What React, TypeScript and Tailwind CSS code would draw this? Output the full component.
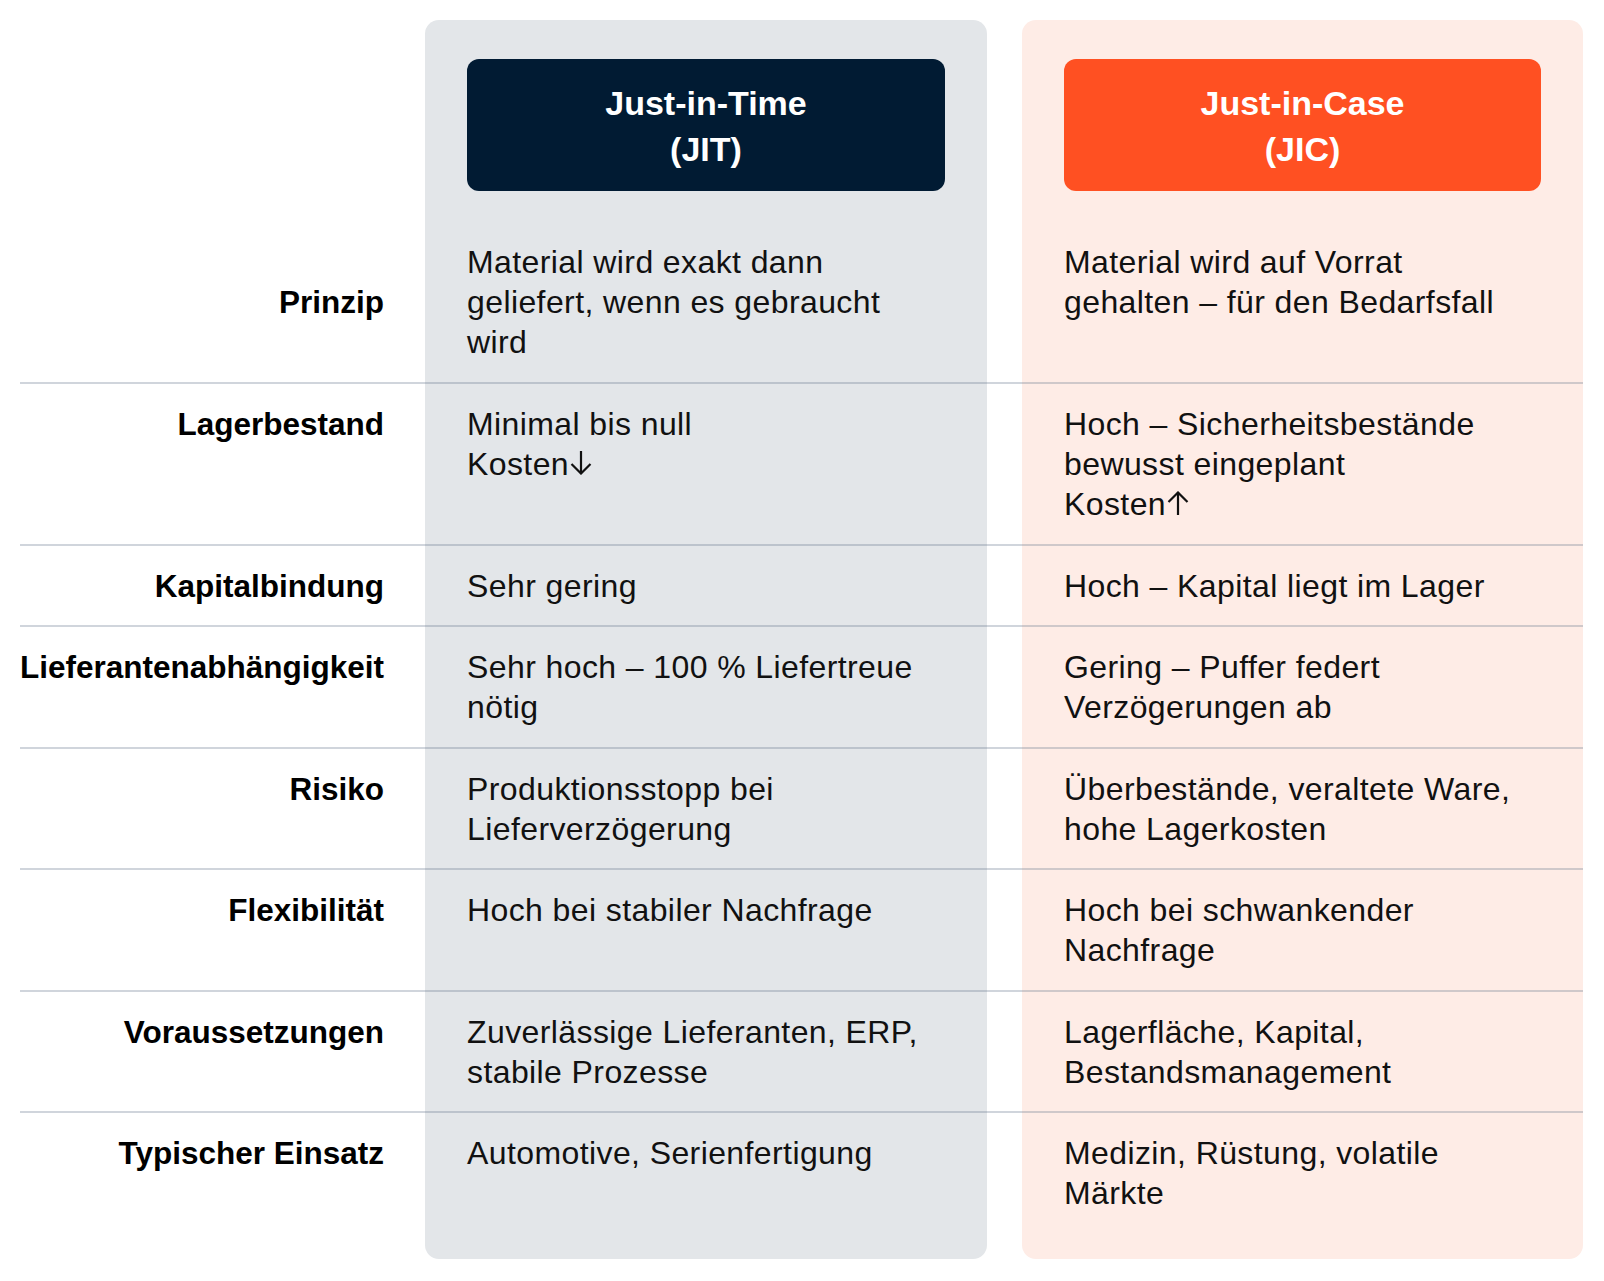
import React from "react";

type RowData = { label: string; jit: string[]; jic: string[] };

const rows: RowData[] = [
  {
    label: "Prinzip",
    jit: ["Material wird exakt dann", "geliefert, wenn es gebraucht", "wird"],
    jic: ["Material wird auf Vorrat", "gehalten – für den Bedarfsfall"],
  },
  {
    label: "Lagerbestand",
    jit: ["Minimal bis null", "Kosten↓"],
    jic: ["Hoch – Sicherheitsbestände", "bewusst eingeplant", "Kosten↑"],
  },
  {
    label: "Kapitalbindung",
    jit: ["Sehr gering"],
    jic: ["Hoch – Kapital liegt im Lager"],
  },
  {
    label: "Lieferantenabhängigkeit",
    jit: ["Sehr hoch – 100 % Liefertreue", "nötig"],
    jic: ["Gering – Puffer federt", "Verzögerungen ab"],
  },
  {
    label: "Risiko",
    jit: ["Produktionsstopp bei", "Lieferverzögerung"],
    jic: ["Überbestände, veraltete Ware,", "hohe Lagerkosten"],
  },
  {
    label: "Flexibilität",
    jit: ["Hoch bei stabiler Nachfrage"],
    jic: ["Hoch bei schwankender", "Nachfrage"],
  },
  {
    label: "Voraussetzungen",
    jit: ["Zuverlässige Lieferanten, ERP,", "stabile Prozesse"],
    jic: ["Lagerfläche, Kapital,", "Bestandsmanagement"],
  },
  {
    label: "Typischer Einsatz",
    jit: ["Automotive, Serienfertigung"],
    jic: ["Medizin, Rüstung, volatile", "Märkte"],
  },
];

function Arrow({ up }: { up: boolean }) {
  return (
    <svg
      width="22"
      height="24"
      viewBox="0 0 22 24"
      className="inline-block align-baseline ml-[1px]"
      fill="none"
      stroke="#111111"
      strokeWidth="2.2"
      strokeLinecap="butt"
      strokeLinejoin="miter"
      aria-label={up ? "↑" : "↓"}
    >
      {up ? (
        <>
          <path d="M11 1.5 V24" />
          <path d="M1.5 11 L11 1.5 L20.5 11" />
        </>
      ) : (
        <>
          <path d="M11 0 V22.5" />
          <path d="M1.5 13 L11 22.5 L20.5 13" />
        </>
      )}
    </svg>
  );
}

function Line({ text }: { text: string }) {
  if (text.endsWith("↓") || text.endsWith("↑")) {
    const up = text.endsWith("↑");
    return (
      <div>
        {text.slice(0, -1)}
        <Arrow up={up} />
      </div>
    );
  }
  return <div>{text}</div>;
}

function Lines({ lines }: { lines: string[] }) {
  return (
    <div className="text-[32px] leading-[40px] tracking-[0.4px] text-[#111111] whitespace-nowrap">
      {lines.map((l, i) => (
        <Line key={i} text={l} />
      ))}
    </div>
  );
}

function Row({ data, first, last }: { data: RowData; first: boolean; last: boolean }) {
  const pad = first ? "pt-[51px] pb-5" : last ? "pt-5 pb-[46px]" : "pt-5 pb-[19.5px]";
  const border = last ? "" : "border-b-2 border-[#64748b4d]";
  return (
    <div className="flex">
      <div
        className={`w-[405px] pr-[41px] flex justify-end ${first ? "items-center" : "items-start"} ${pad} ${border}`}
      >
        <div className="text-[31.5px] leading-[40px] font-bold text-black whitespace-nowrap">{data.label}</div>
      </div>
      <div className={`w-[562px] px-[42px] bg-[#e3e6e9] ${pad} ${border} ${last ? "rounded-b-[14px]" : ""}`}>
        <Lines lines={data.jit} />
      </div>
      <div className={`w-[35px] ${border}`} />
      <div className={`w-[561px] px-[42px] bg-[#feece6] ${pad} ${border} ${last ? "rounded-b-[14px]" : ""}`}>
        <Lines lines={data.jic} />
      </div>
    </div>
  );
}

export default function App() {
  return (
    <div
      className="w-[1604px] min-h-[1281px] bg-white pt-5 pl-5"
      style={{ fontFamily: '"Liberation Sans", Arial, sans-serif' }}
    >
      <div className="flex">
        <div className="w-[405px]" />
        <div className="w-[562px] px-[42px] pt-[39px] bg-[#e3e6e9] rounded-t-[14px]">
          <div className="h-[132px] rounded-[12px] bg-[#011b33] flex flex-col items-center justify-center text-white font-bold text-[34px] leading-[46px] pt-[2px]">
            <div>Just-in-Time</div>
            <div>(JIT)</div>
          </div>
        </div>
        <div className="w-[35px]" />
        <div className="w-[561px] px-[42px] pt-[39px] bg-[#feece6] rounded-t-[14px]">
          <div className="h-[132px] rounded-[12px] bg-[#ff5022] flex flex-col items-center justify-center text-white font-bold text-[34px] leading-[46px] pt-[2px]">
            <div>Just-in-Case</div>
            <div>(JIC)</div>
          </div>
        </div>
      </div>
      {rows.map((r, i) => (
        <Row key={r.label} data={r} first={i === 0} last={i === rows.length - 1} />
      ))}
    </div>
  );
}
